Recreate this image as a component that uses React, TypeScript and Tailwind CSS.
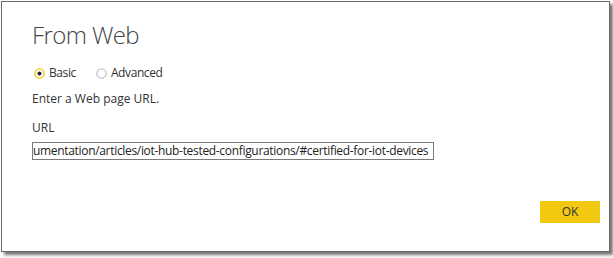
import React from "react";

const font = { fontFamily: '"Segoe UI", "Open Sans", "Noto Sans", sans-serif' };

function Radio({ checked }: { checked: boolean }) {
  return (
    <svg width="11" height="11" viewBox="0 0 11 11" className="shrink-0">
      <circle cx="5.5" cy="5.5" r="4.6" fill="#fff" stroke={checked ? "#f2c811" : "#c6c6c6"} strokeWidth="1.4" />
      {checked && <circle cx="5.5" cy="5.5" r="2" fill="#222" />}
    </svg>
  );
}

export default function App() {
  return (
    <div className="w-[613px] h-[258px] bg-white pt-[1px] pl-[1px]" style={font}>
      <div className="w-[609px] h-[251px] border border-[#6a6a6a] bg-white shadow-[3px_3px_3px_rgba(0,0,0,0.55)] flex flex-col pl-[30px] pr-[9px] pt-[17px]">
        <div className="text-[24px] leading-[32px] font-light tracking-[-0.6px] text-[#444]">From Web</div>
        <div className="mt-[14px] flex items-center h-[16px] text-[12px] leading-[16px] text-[#333] tracking-[-0.4px]">
          <div className="flex items-center gap-[4px] ml-[2px]">
            <Radio checked />
            <span>Basic</span>
          </div>
          <div className="flex items-center gap-[4px] ml-[20px]">
            <Radio checked={false} />
            <span>Advanced</span>
          </div>
        </div>
        <div className="mt-[10px] text-[12px] leading-[16px] text-[#333]">Enter a Web page URL.</div>
        <div className="mt-[13px] text-[12px] leading-[16px] text-[#333]">URL</div>
        <div className="mt-[6px] w-[402px] h-[18px] border border-[#7a7a7a] flex items-center overflow-hidden whitespace-nowrap text-[12px] leading-[16px] text-[#222]">
          <span className="tracking-[-0.32px]">umentation/articles/iot-hub-tested-configurations/#certified-for-iot-devices</span>
        </div>
        <div className="mt-[41px] self-end w-[60px] h-[22px] bg-[#f2c811] flex items-center justify-center text-[12px] text-[#333]">
          OK
        </div>
      </div>
    </div>
  );
}
